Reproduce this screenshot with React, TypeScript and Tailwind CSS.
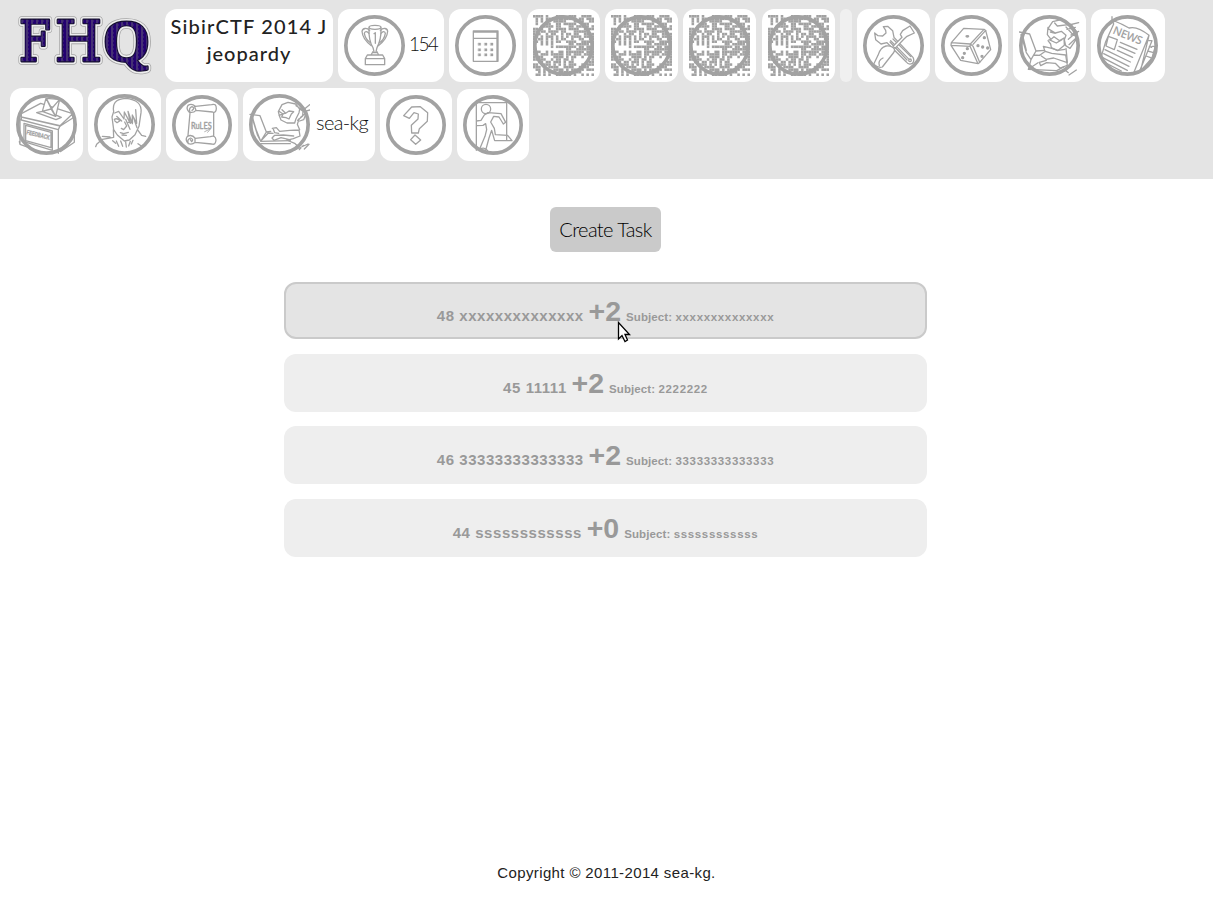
import React from "react";

type IconProps = { children: React.ReactNode; ox: number; oy: number; size?: number };

/* Line drawing inside a ring; ox/oy move the drawing's own origin. */
function RingIcon({ children, ox, oy, size = 61 }: IconProps) {
  const d = size * 3;
  return (
    <svg
      width={size}
      height={size}
      viewBox={`0 0 ${d} ${d}`}
      className="block shrink-0"
      fill="none"
      stroke="#a2a2a2"
      strokeWidth={3.9}
      strokeLinejoin="round"
      strokeLinecap="round"
    >
      <g transform={`translate(${-ox} ${-oy})`}>{children}</g>
      <circle cx={d / 2} cy={d / 2} r={d / 2 - 5.5} strokeWidth={11} />
    </svg>
  );
}

const Trophy = () => (
  <RingIcon ox={27} oy={45}>
    <ellipse cx="120" cy="82" rx="18" ry="6" />
    <path d="M102 84C101 108 103 126 114 143L117 155M138 84C139 108 135 126 126 143L123 155" />
    <path d="M104 92C96 82 83 84 81 94C82 110 91 124 109 137M102 100C96 92 89 94 88 100C90 112 97 122 106 128" />
    <path d="M136 92C144 82 157 84 158 94C157 110 148 124 130 137M138 100C144 92 150 94 151 100C149 112 143 122 133 128" />
    <path d="M117 101L121 98V130M114 155L108 165M126 155L131 165M116 158H125M97 165H143L149 176H91ZM91 176H149V194H91Z" />
  </RingIcon>
);

const Calendar = () => (
  <RingIcon ox={360} oy={45}>
    <path d="M415 93H489V184H415ZM415 96H489M415 115H489M486 95V184" />
    {[132, 149, 164].map((y) =>
      [433, 452, 470].map((x) => (
        <rect key={`${x}-${y}`} x={x - 3} y={y - 3} width="7" height="7" fill="#a2a2a2" strokeWidth="1" />
      ))
    )}
  </RingIcon>
);

const CODE = [
  "####.#...###..###..####.",
  ".#.#.##..########.##.###",
  ".#.#.#..#####...####..##",
  ".#...##..##.#####..###..",
  "...#####.##...##.#####.#",
  "##.#..#..####.####..####",
  "##.##.####.##...######..",
  "#.#..#.##..#.##.##..####",
  "##.#.###.#.#.#.####.####",
  "#.##.#.#.#.##..#..##..##",
  "##.#.#.#.##..####..#####",
  "#..#.#.#......##.#####.#",
  "#......#.########.##.###",
  "#............##..#######",
  "###..#.#..##.#######.###",
  "##.###.#####.##.###.####",
  "####....####.#.##..#..##",
  "#####..#.##.##.#.......#",
  "..##.##.###.#.##......##",
  "##..###.#.#.#.###..#.###",
  "###.#.####..####..####..",
  ".##.#...####.#.#####.###",
  "..#.#.##..#####.###.....",
  ".##.#.#..##.###.#..#.#.#",
];

const Code = () => (
  <RingIcon ox={0} oy={0}>
    {CODE.map((row, y) =>
      row.split("").map((c, x) =>
        c === "#" ? (
          <rect key={`${x}-${y}`} x={x * 7.625} y={y * 7.625} width="7.7" height="7.7" fill="#a2a2a2" stroke="none" />
        ) : null
      )
    )}
  </RingIcon>
);

const Tools = () => (
  <RingIcon ox={39} oy={45}>
    <path d="M100 80L113 79L128 92L132 112L189 172Q195 184 186 191Q175 195 169 186L111 128L93 132L77 119L74 99L84 107L98 108L108 99L107 91Z" />
    <path d="M122 122L175 176M129 117L183 170M120 126L171 180" />
    <circle cx="180" cy="181" r="4" />
    <path fill="white" d="M151 103L158 92L180 78L193 99L171 109L162 117L135 145L129 139L156 112Z" />
    <path fill="white" d="M126 141Q139 148 130 159L97 201Q84 205 71 193L84 166Q91 142 108 138Q118 136 126 141ZM99 174Q83 181 88 197" />
  </RingIcon>
);

const Dice = () => (
  <RingIcon ox={273} oy={45}>
    <path d="M304 128L341 85L402 88L361 132ZM304 128L303 136L360 139L361 132M303 136L332 181L384 191L360 139M361 132L369 139L389 187L422 149L407 91L369 133M402 88L408 92M384 191L390 187" />
    <g fill="#a2a2a2">
      <ellipse cx="352" cy="109" rx="4" ry="2" />
      <circle cx="352" cy="146" r="3" />
      <circle cx="343" cy="160" r="3" />
      <circle cx="338" cy="173" r="3" />
      <circle cx="403" cy="113" r="3" />
      <circle cx="384" cy="137" r="3" />
      <circle cx="398" cy="141" r="3" />
      <circle cx="413" cy="144" r="3" />
      <circle cx="396" cy="169" r="3" />
    </g>
  </RingIcon>
);

const Hacker = () => (
  <RingIcon ox={42} oy={45}>
    <path d="M43 96L74 102L93 153L78 179L64 158L48 104M52 103L64 151M93 153L119 151M78 179L70 208L155 212L178 200M72 206L99 188M86 165L104 166" />
    <path d="M104 166L121 154L140 160L182 165L187 196L165 204L151 190L125 188L107 197L103 187L124 181M109 168L123 178L146 174L187 188M119 151L115 139L140 145L159 151L180 148" />
    <path d="M129 82L127 104L138 118L147 110L164 122L177 114L178 136L158 152L139 143L137 132L129 122M129 86L143 65L172 58L199 75L217 97L213 119L195 145L182 137L178 119M129 86L151 99L169 94L183 106L178 119M149 69L157 78L190 74M183 81L202 102L221 94M190 118L216 95M192 75L221 68M183 145L187 186M192 134L211 116M132 119L154 129L171 119M136 96L151 100M179 209L190 218M192 225L214 210M198 105L215 107M186 88L211 82" />
  </RingIcon>
);

const User = () => (
  <RingIcon ox={267} oy={42}>
    <path d="M270 103L300 107L319 156L302 184L292 164L276 111M276 108L289 151L302 184L391 182M302 191L391 191M305 180L325 159L339 160M319 156L332 154" />
    <path d="M337 145L349 143L359 154L390 151L417 150L420 168L400 176L388 179L363 173L342 181L336 174L344 166L370 165L401 168M339 145L344 158L356 160M380 180L404 190L415 200M419 149L412 133L417 117" />
    <path d="M355 95L366 74L384 67L407 72L419 87L417 98L408 116L404 129H381L363 120L358 107ZM357 94L369 102L365 111L378 113L387 117L394 102L401 95L387 93L377 100L366 89M408 77L429 91L449 74M419 87L431 95L450 90M429 91L428 108L413 121M422 112L437 100M440 96L431 119L419 123M404 210L444 192M418 209L430 196M433 207L447 193M357 106L374 100" />
  </RingIcon>
);

const News = () => (
  <RingIcon ox={276} oy={45}>
    <path d="M321 50V60L326 72L302 125L289 169M321 60Q352 72 372 84Q397 77 432 106L386 219M432 106L407 211L386 219M432 122H441L427 157L404 213M441 139H451L441 174L412 207M449 152L437 184M433 139L440 142M428 153L443 157M423 168L437 173M310 109L337 119L328 149L303 138ZM346 127L396 148M342 139L390 160M337 151L383 172M300 149L376 186M296 161L372 199M293 173L367 211M294 185L349 213" />
    <text x="321" y="100" transform="rotate(22 321 100)" fill="#a2a2a2" stroke="none" fontFamily="Open Sans, sans-serif" fontWeight="600" fontSize="34" textLength="92">NEWS</text>
  </RingIcon>
);

const Feedback = () => (
  <RingIcon ox={48} oy={42}>
    <path d="M64 101L122 70L218 101L180 137L64 111ZM180 137L175 149L64 120V111M175 149V220M181 138L223 111V187L181 215M122 216L60 193V117M60 193L58 185M64 111L181 138M218 101V111" />
    <path d="M72 130L157 153V211L72 185ZM77 136L153 157V203L77 182Z" />
    <path fill="white" d="M127 94L110 98L168 119L184 112L170 106M127 94L138 55L179 58L167 109ZM138 55L154 87L179 58M127 94L153 87L167 109M139 55L167 109" />
    <text x="79" y="162" transform="rotate(14 79 162)" fill="#a2a2a2" stroke="#a2a2a2" strokeWidth="1" fontFamily="Liberation Sans, sans-serif" fontWeight="700" fontSize="19" textLength="71" lengthAdjust="spacingAndGlyphs">FEEDBACK</text>
  </RingIcon>
);

const Portrait = () => (
  <RingIcon ox={282} oy={42}>
    <path d="M341 95C337 72 345 57 377 55C410 58 426 72 423 98L417 139L405 164L388 180L373 183L352 165L341 149L336 111Z" />
    <path d="M344 99L356 94L372 117L373 96L391 130L384 94L397 131V105L410 130L407 89M350 109L365 123M377 118L390 148M401 114L411 143M343 118Q351 113 360 122L351 128L344 122M374 126L380 138L371 149L364 145M361 158L371 161L385 157M366 165L379 166M385 127L398 126M340 149L341 172L307 178L290 193L287 200M413 150L425 166L437 169M307 169L330 171M338 182L347 190M349 183L356 199M362 183L368 199M377 186L379 201M391 184L386 198M399 181L394 192M414 191L424 198" />
  </RingIcon>
);

const Rules = () => (
  <RingIcon ox={36} oy={45} size={60}>
    <path d="M88 97Q77 86 84 76Q95 69 106 79L155 74Q169 69 169 86Q168 100 158 96L108 91Q101 99 90 97Q85 84 96 80Q106 85 96 91M103 78L108 91M90 99L84 166M161 98V167M85 191Q74 179 82 169Q96 162 106 175L151 170Q166 164 168 180Q167 196 155 192L106 187Q96 195 85 191Q80 178 92 174Q102 178 95 185L91 179M105 174V188" />
    <text x="93" y="147" fill="#a2a2a2" stroke="#a2a2a2" strokeWidth="1" fontFamily="Lato, sans-serif" fontSize="29" fontWeight="600" textLength="62" lengthAdjust="spacingAndGlyphs">RuLES</text>
    <path strokeWidth="2.5" d="M134 155L152 146L143 157" />
  </RingIcon>
);

const Question = () => (
  <RingIcon ox={48} oy={45} size={60}>
    <path d="M101 107L125 81L151 80L173 98L172 124L148 146L145 159H125L124 136L144 117L145 102L132 98L118 115ZM135 165L152 180L137 193L122 179Z" />
  </RingIcon>
);

const Exit = () => (
  <RingIcon ox={279} oy={45} size={60}>
    <path d="M319 211V68H410V180M324 68H410M319 137V123L333 121L343 105L354 98L393 101L407 127L400 132L387 111L371 109L362 126L373 145L376 164L413 166L426 182H374L365 151L357 174L347 211L328 209L345 169L350 149L347 131L339 136Z" />
    <circle cx="348" cy="87" r="14" />
    <path d="M329 208Q343 199 353 212" />
  </RingIcon>
);

function Card({ children }: { children: React.ReactNode }) {
  return <div className="flex h-[73px] shrink-0 items-start rounded-xl bg-white p-1.5">{children}</div>;
}

function Logo() {
  const glyphs = (
    <>
      <text x="19" y="61" fontFamily="DejaVu Serif, serif" fontWeight="400" fontSize="56" textLength="32" lengthAdjust="spacingAndGlyphs">F</text>
      <text x="55" y="61" fontFamily="DejaVu Serif, serif" fontWeight="400" fontSize="56" textLength="47" lengthAdjust="spacingAndGlyphs">H</text>
      <text x="103" y="60.5" fontSize="60" textLength="47" lengthAdjust="spacingAndGlyphs">Q</text>
    </>
  );
  return (
    <svg width="150" height="73" viewBox="10 9 150 73" className="block shrink-0 overflow-visible" fontFamily="Liberation Serif, serif" fontWeight="700" strokeLinejoin="round">
      <defs>
        <pattern id="digits" width="5" height="4" patternUnits="userSpaceOnUse">
          <rect width="5" height="4" fill="#230070" />
          <path d="M1 1H3.5M1 3H3" stroke="#6d6a78" strokeWidth=".9" />
        </pattern>
      </defs>
      <g fill="#a5a5a5" stroke="#a5a5a5" strokeWidth="7.6">{glyphs}</g>
      <g fill="#eee" stroke="#eee" strokeWidth="6">{glyphs}</g>
      <g stroke="#15102e" strokeWidth="2.8">{glyphs}</g>
      <g fill="url(#digits)" stroke="url(#digits)" strokeWidth=".6">{glyphs}</g>
    </svg>
  );
}

const tasks = [
  { id: 48, name: "xxxxxxxxxxxxxx", score: "+2", subject: "xxxxxxxxxxxxxx", box: "h-[57px] border-2 border-[#cacaca] bg-[#e4e4e4] pt-[9px]" },
  { id: 45, name: "11111", score: "+2", subject: "2222222", box: "mt-[15px] h-[58px] bg-[#eeeeee] pt-[11px]" },
  { id: 46, name: "33333333333333", score: "+2", subject: "33333333333333", box: "mt-[14px] h-[58px] bg-[#eeeeee] pt-[11px]" },
  { id: 44, name: "ssssssssssss", score: "+0", subject: "ssssssssssss", box: "mt-[15px] h-[58px] bg-[#eeeeee] pt-[11px]" },
];

export default function App() {
  return (
    <div className="relative flex h-[903px] w-[1213px] flex-col items-center overflow-hidden bg-white font-['Liberation_Sans',Arial,sans-serif]">
      <header className="flex h-[179px] w-full shrink-0 flex-col gap-1.5 bg-[#e4e4e4] pt-[9px] pl-2.5">
        <div className="flex gap-[5px]">
          <Logo />
          <div className="h-[73px] w-[168px] shrink-0 rounded-xl bg-white pt-1 text-center font-['Lato',sans-serif] text-[20px] leading-[27px] font-medium text-[#222]">
            <div className="tracking-[1.15px] whitespace-nowrap">SibirCTF 2014 J</div>
            <div className="tracking-[1px]">jeopardy</div>
          </div>
          <div className="flex h-[73px] w-[106px] shrink-0 gap-1 rounded-xl bg-white p-1.5">
            <Trophy />
            <span className="pt-[17px] font-['Lato',sans-serif] text-[19px] leading-6 font-light tracking-[-1.6px] text-[#111]">154</span>
          </div>
          <Card><Calendar /></Card>
          <Card><Code /></Card>
          <Card><Code /></Card>
          <Card><Code /></Card>
          <div className="ml-px flex"><Card><Code /></Card></div>
          <div className="h-[73px] w-3 shrink-0 rounded-md bg-[#f0f0f0]" />
          <Card><Tools /></Card>
          <Card><Dice /></Card>
          <Card><Hacker /></Card>
          <div className="h-[73px] w-[74px] shrink-0 rounded-xl bg-white p-1.5"><News /></div>
        </div>
        <div className="flex items-end gap-[5px]">
          <Card><Feedback /></Card>
          <Card><Portrait /></Card>
          <div className="h-[72px] rounded-xl bg-white p-1.5"><Rules /></div>
          <div className="flex h-[73px] w-[132px] shrink-0 gap-1.5 rounded-xl bg-white p-1.5">
            <User />
            <span className="pt-4 font-['Lato',sans-serif] text-[20px] leading-6 font-light tracking-[-0.6px] whitespace-nowrap text-[#111]">sea-kg</span>
          </div>
          <div className="h-[72px] rounded-xl bg-white p-1.5"><Question /></div>
          <div className="h-[72px] rounded-xl bg-white p-1.5"><Exit /></div>
        </div>
      </header>

      <button className="mt-7 mr-[2px] h-[45px] w-[111px] shrink-0 rounded-md bg-[#cacaca] pb-0.5 font-['Lato',sans-serif] text-[20px] font-light tracking-[-0.6px] whitespace-nowrap text-black">
        Create Task
      </button>

      <main className="mt-[30px] mr-[2px] flex w-[643px] flex-col">
        {tasks.map((t) => (
          <div key={t.id} className={`${t.box} rounded-xl text-center leading-9 font-bold whitespace-nowrap text-[#999]`}>
            <span className="text-[15px] tracking-[0.55px]">{t.id} {t.name} </span>
            <span className="text-[28.5px]">{t.score}</span>
            <span className="text-[18px]"> </span>
            <span className="text-[11.5px] tracking-[0.1px]">Subject: <span className="tracking-[0.66px]">{t.subject}</span></span>
          </div>
        ))}
      </main>

      <footer className="mt-auto mb-[18px] text-[15px] leading-6 tracking-[0.37px] text-[#222]">Copyright © 2011-2014 sea-kg.</footer>

      <svg className="absolute top-[321px] left-[617px]" width="14" height="22" viewBox="0 0 14 22">
        <path d="M1.5 1.5V18L5 14.5L8 20.5L10.5 19L8 13.5H12.5Z" fill="white" stroke="black" strokeWidth="1.3" />
      </svg>
    </div>
  );
}
